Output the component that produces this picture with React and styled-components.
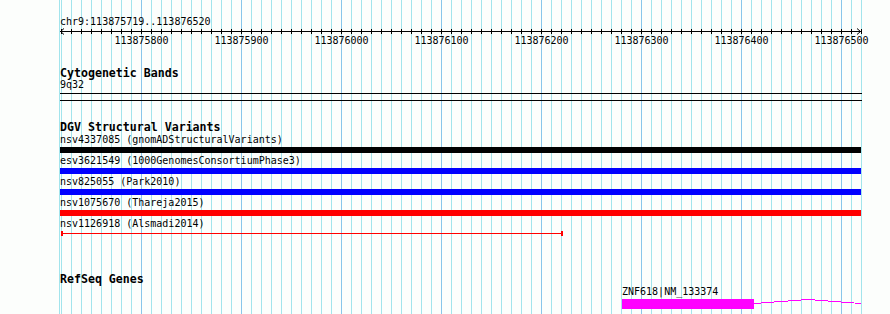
import React from 'react';
import styled, { createGlobalStyle } from 'styled-components';

// 1 px per bp, track column starts at x=59 on the page
const START = 113875719;
const toX = (bp) => 1 + bp - START;

const GRID = '#a2e4ec';
const GRID_MAJOR = '#88c6ea';

const GlobalStyle = createGlobalStyle`
  html, body {
    margin: 0;
    padding: 0;
    background: #fcfefc;
  }
`;

const Canvas = styled.div`
  width: 890px;
  height: 314px;
  overflow: hidden;
  padding-left: 59px;
  box-sizing: border-box;
  background: #fcfefc;
  color: #000;
`;

const Column = styled.div`
  position: relative;
  width: 804px;
  height: 100%;
  display: flex;
  flex-direction: column;

  & > * {
    position: relative;
  }
`;

const GridLayer = styled.svg`
  position: absolute !important;
  top: 0;
  left: 0;
  width: 804px;
  height: 100%;
  display: block;
`;

const Caption = styled.div`
  font-family: "DejaVu Sans Mono", monospace;
  font-size: 10px;
  line-height: 9px;
  height: 11px;
  white-space: nowrap;
  padding-left: ${(p) => p.$indent ?? 1}px;
  margin-top: ${(p) => p.$top ?? 0}px;
`;

const TrackTitle = styled.div`
  font-family: "DejaVu Sans Mono", monospace;
  font-weight: bold;
  font-size: 11.6px;
  line-height: 12px;
  height: 13px;
  white-space: nowrap;
  padding-left: 1px;
  margin-top: ${(p) => p.$top}px;
`;

const Ruler = styled.div`
  display: flex;
  flex-direction: column;
  height: 19px;
`;

const ScaleLabels = styled.div`
  position: relative;
  height: 11px;
  font-family: "DejaVu Sans Mono", monospace;
  font-size: 10px;
  line-height: 9px;
`;

const ScaleLabel = styled.span`
  position: absolute;
  top: 0;
  transform: translateX(-50%);
  white-space: nowrap;
`;

const Band = styled.div`
  margin-top: 2px;
  margin-left: 1px;
  width: 802px;
  height: 8px;
  box-sizing: border-box;
  border-top: 1px solid #000;
  border-bottom: 1px solid #000;
`;

const Rows = styled.div`
  display: flex;
  flex-direction: column;
  gap: 3px;
  margin-top: 1px;
`;

const Row = styled.div`
  display: flex;
  flex-direction: column;
  gap: 1px;
`;

const Bar = styled.div`
  height: 6px;
  margin-left: 1px;
  width: 801px;
  background: ${(p) => p.$color};
`;

const Span = styled.div`
  position: relative;
  height: 5px;
  margin-bottom: 1px;
  box-sizing: border-box;
  border-left: 2px solid ${(p) => p.$color};
  border-right: 2px solid ${(p) => p.$color};

  &::before {
    content: '';
    position: absolute;
    left: 0;
    right: 0;
    top: 2px;
    height: 1px;
    background: ${(p) => p.$color};
  }
`;

const Gene = styled.div`
  display: flex;
  height: 10px;
  margin-top: 1px;
`;

const Exon = styled.div`
  height: 10px;
  background: #ff00ff;
`;

const variants = [
  { name: 'nsv4337085 (gnomADStructuralVariants)', color: '#000000' },
  { name: 'esv3621549 (1000GenomesConsortiumPhase3)', color: '#0000ff' },
  { name: 'nsv825055 (Park2010)', color: '#0000ff' },
  { name: 'nsv1075670 (Thareja2015)', color: '#ff0000' },
  { name: 'nsv1126918 (Alsmadi2014)', color: '#ff0000', from: 113875720, to: 113876221 },
];

const labels = [113875800, 113875900, 113876000, 113876100, 113876200, 113876300, 113876400, 113876500];

const ticks = [];
for (let x = 2; x <= 802; x += 10) ticks.push(x);

function Grid() {
  return (
    <GridLayer shapeRendering="crispEdges">
      <rect x="0" y="0" width="1" height="314" fill={GRID} />
      {ticks.map((x) => (
        <rect
          key={x}
          x={x}
          y="0"
          width="1"
          height="314"
          fill={(x - 82) % 100 === 0 ? GRID_MAJOR : GRID}
        />
      ))}
    </GridLayer>
  );
}

function Scale() {
  return (
    <Ruler>
      <svg width="804" height="8" style={{ display: 'block' }} shapeRendering="crispEdges">
        <line x1="1" y1="3.5" x2="802" y2="3.5" stroke="#000" />
        {ticks.map((x) => (
          <line key={x} x1={x + 0.5} y1="1" x2={x + 0.5} y2="6" stroke="#000" />
        ))}
        <polyline points="5,0.5 1.5,3.5 5,6.5" fill="none" stroke="#000" shapeRendering="auto" />
        <polyline points="798,0.5 801.5,3.5 798,6.5" fill="none" stroke="#000" shapeRendering="auto" />
      </svg>
      <ScaleLabels>
        {labels.map((bp) => (
          <ScaleLabel key={bp} style={{ left: toX(bp) + 0.5 }}>{bp}</ScaleLabel>
        ))}
      </ScaleLabels>
    </Ruler>
  );
}

export default function App() {
  const exonStart = toX(113876281);
  const exonEnd = toX(113876413);
  return (
    <Canvas>
      <GlobalStyle />
      <Column>
        <Grid />
        <Caption $top={17}>chr9:113875719..113876520</Caption>
        <Scale />

        <TrackTitle $top={20}>Cytogenetic Bands</TrackTitle>
        <Caption>9q32</Caption>
        <Band />

        <TrackTitle $top={20}>DGV Structural Variants</TrackTitle>
        <Rows>
          {variants.map((v) => (
            <Row key={v.name}>
              <Caption>{v.name}</Caption>
              {v.from ? (
                <Span
                  $color={v.color}
                  style={{ marginLeft: toX(v.from), width: v.to - v.from + 1 }}
                />
              ) : (
                <Bar $color={v.color} />
              )}
            </Row>
          ))}
        </Rows>

        <TrackTitle $top={36}>RefSeq Genes</TrackTitle>
        <Caption $top={1} $indent={exonStart}>ZNF618|NM_133374</Caption>
        <Gene>
          <Exon style={{ marginLeft: exonStart, width: exonEnd - exonStart }} />
          <svg width="108" height="10" style={{ display: 'block' }} shapeRendering="crispEdges">
            <polyline points="0,4.5 54,0.5 107,4.5" fill="none" stroke="#ff00ff" />
          </svg>
        </Gene>
      </Column>
    </Canvas>
  );
}
